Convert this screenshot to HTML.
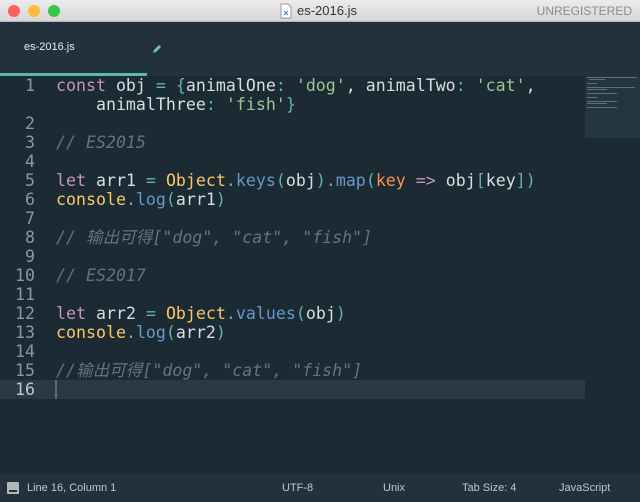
<!DOCTYPE html><html><head><meta charset="utf-8"><style>
*{margin:0;padding:0;box-sizing:border-box}
body{width:640px;height:502px;overflow:hidden;background:#1c2a33;font-family:"Liberation Sans",sans-serif;position:relative}
#title{position:absolute;left:0;top:0;width:640px;height:22px;background:linear-gradient(#ececec,#d6d6d6);border-bottom:1px solid #b8b8b8}
.dot{position:absolute;top:5px;width:12px;height:12px;border-radius:6px}
#title .t{position:absolute;left:297px;top:3px;font-size:13px;color:#333}
#title .u{position:absolute;right:8px;top:4px;font-size:12px;color:#8a8a8a}
#tabs{position:absolute;top:22px;left:0;width:640px;height:54px;background:#22313b}
#tabs .n{position:absolute;left:24px;top:19px;font-size:11px;color:#e8eef0}
#tabs .ul{position:absolute;left:0;top:51px;width:147px;height:3px;background:#5fb7b2}
#code{position:absolute;top:76px;left:0;width:585px;font-family:"DejaVu Sans Mono","Noto Sans CJK SC",monospace;font-size:16.6px;line-height:19px;color:#d8dee4}
.r{height:19px;position:relative;white-space:pre}
.ln{position:absolute;left:0;width:35px;text-align:right;color:#8b989f}
.c{position:absolute;left:56px}
.k{color:#c594c5}.p{color:#5fb3b3}.s{color:#99c794}.o{color:#fac863}.f{color:#6699cc}.a{color:#f99157}.cm{color:#65737e;font-style:italic}
#mini{position:absolute;left:585px;top:76px;width:55px;height:62px;background:#24363f}
#mini i{position:absolute;height:1px;background:#5d7078}
#status{position:absolute;top:474px;left:0;width:640px;height:28px;background:#22313b;font-size:11px;color:#c0c8cc}
#status span{position:absolute;top:8px}
</style></head><body>
<div id="title">
<div class="dot" style="left:8px;background:#fc605c"></div>
<div class="dot" style="left:28px;background:#fdbc40"></div>
<div class="dot" style="left:48px;background:#34c84a"></div>
<svg style="position:absolute;left:280px;top:3px" width="12" height="16"><path d="M1 1h7l3 3v11H1z" fill="#fff" stroke="#999"/><path d="M4 8l4 4M8 8l-4 4" stroke="#4a7fc0"/></svg>
<div class="t">es-2016.js</div><div class="u">UNREGISTERED</div></div>
<div id="tabs"><div class="n">es-2016.js</div>
<svg style="position:absolute;left:152px;top:22px" width="10" height="10"><path d="M1 9l1-3 5-5 2 2-5 5z" fill="#6fc3bd"/></svg>
<div class="ul"></div></div>
<div id="mini">
<i style="left:2px;top:1px;width:50px"></i><i style="left:4px;top:3px;width:16px"></i>
<i style="left:2px;top:7px;width:10px"></i>
<i style="left:2px;top:11px;width:48px"></i><i style="left:2px;top:13px;width:20px"></i>
<i style="left:2px;top:17px;width:30px"></i>
<i style="left:2px;top:21px;width:10px"></i>
<i style="left:2px;top:25px;width:30px"></i><i style="left:2px;top:27px;width:20px"></i>
<i style="left:2px;top:31px;width:30px"></i>
</div>
<div style="position:absolute;left:0;top:380px;width:585px;height:19px;background:#2a3a44"></div>
<div style="position:absolute;left:55px;top:380px;width:2px;height:19px;background:#5a6b74"></div>
<div id="code">
<div class="r"><span class="ln">1</span><span class="c"><span class="k">const</span> obj <span class="p">=</span> <span class="p">{</span>animalOne<span class="p">:</span> <span class="s">'dog'</span>, animalTwo<span class="p">:</span> <span class="s">'cat'</span>,</span></div>
<div class="r"><span class="c">    animalThree<span class="p">:</span> <span class="s">'fish'</span><span class="p">}</span></span></div>
<div class="r"><span class="ln">2</span></div>
<div class="r"><span class="ln">3</span><span class="c cm">// ES2015</span></div>
<div class="r"><span class="ln">4</span></div>
<div class="r"><span class="ln">5</span><span class="c"><span class="k">let</span> arr1 <span class="p">=</span> <span class="o">Object</span><span class="p">.</span><span class="f">keys</span><span class="p">(</span>obj<span class="p">).</span><span class="f">map</span><span class="p">(</span><span class="a">key</span> <span class="k">=&gt;</span> obj<span class="p">[</span>key<span class="p">])</span></span></div>
<div class="r"><span class="ln">6</span><span class="c"><span class="o">console</span><span class="p">.</span><span class="f">log</span><span class="p">(</span>arr1<span class="p">)</span></span></div>
<div class="r"><span class="ln">7</span></div>
<div class="r"><span class="ln">8</span><span class="c cm">// 输出可得["dog", "cat", "fish"]</span></div>
<div class="r"><span class="ln">9</span></div>
<div class="r"><span class="ln">10</span><span class="c cm">// ES2017</span></div>
<div class="r"><span class="ln">11</span></div>
<div class="r"><span class="ln">12</span><span class="c"><span class="k">let</span> arr2 <span class="p">=</span> <span class="o">Object</span><span class="p">.</span><span class="f">values</span><span class="p">(</span>obj<span class="p">)</span></span></div>
<div class="r"><span class="ln">13</span><span class="c"><span class="o">console</span><span class="p">.</span><span class="f">log</span><span class="p">(</span>arr2<span class="p">)</span></span></div>
<div class="r"><span class="ln">14</span></div>
<div class="r"><span class="ln">15</span><span class="c cm">//输出可得["dog", "cat", "fish"]</span></div>
<div class="r"><span class="ln" style="color:#c0c8cc">16</span></div>
</div>
<div id="status">
<svg style="position:absolute;left:7px;top:8px" width="12" height="12"><rect x="0" y="0" width="12" height="12" rx="1" fill="#b0b8bc"/><rect x="2" y="8" width="8" height="2" fill="#22313b"/></svg>
<span style="left:27px">Line 16, Column 1</span><span style="left:282px">UTF-8</span><span style="left:383px">Unix</span><span style="left:462px">Tab Size: 4</span><span style="left:559px">JavaScript</span></div>
</body></html>
